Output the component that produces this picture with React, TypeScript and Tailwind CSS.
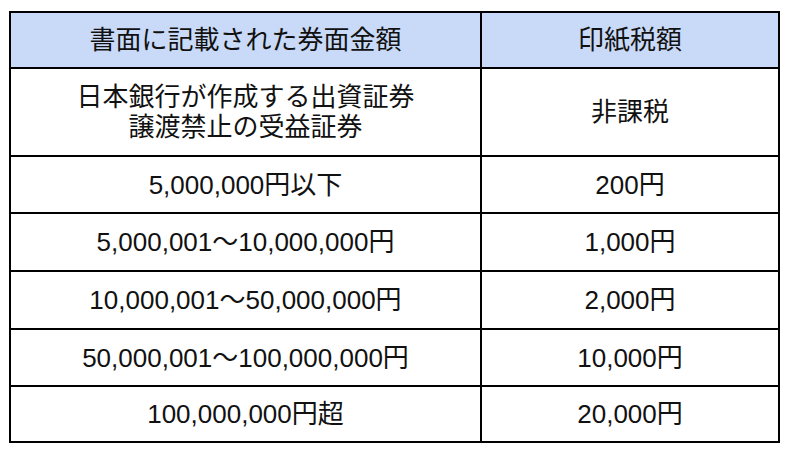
// Stamp duty table (印紙税額) for securities, by face value.

const rows: { amount: string[]; tax: string; h: string }[] = [
  { amount: ["日本銀行が作成する出資証券", "譲渡禁止の受益証券"], tax: "非課税", h: "h-[88px]" },
  { amount: ["5,000,000円以下"], tax: "200円", h: "h-[57px]" },
  { amount: ["5,000,001〜10,000,000円"], tax: "1,000円", h: "h-[58px]" },
  { amount: ["10,000,001〜50,000,000円"], tax: "2,000円", h: "h-[58px]" },
  { amount: ["50,000,001〜100,000,000円"], tax: "10,000円", h: "h-[57px]" },
  { amount: ["100,000,000円超"], tax: "20,000円", h: "h-[56px]" },
];

export default function App() {
  return (
    <div
      className="h-[452px] w-[792px] bg-white pl-[9px] pt-[11px] text-[26px] leading-[30px] text-[#111]"
      style={{ fontFamily: '"Liberation Sans", "Noto Sans CJK JP", sans-serif' }}
    >
      <div className="flex w-[771px] flex-col border-2 border-black">
        <div className="flex h-[54px] bg-[#c9daf8]">
          <div className="flex w-[471px] items-center justify-center border-r-2 border-black">
            書面に記載された券面金額
          </div>
          <div className="flex flex-1 items-center justify-center">印紙税額</div>
        </div>
        {rows.map((row) => (
          <div key={row.tax} className={`flex border-t-2 border-black ${row.h}`}>
            <div className="flex w-[471px] flex-col items-center justify-center border-r-2 border-black">
              {row.amount.map((line) => (
                <span key={line}>{line}</span>
              ))}
            </div>
            <div className="flex flex-1 items-center justify-center">{row.tax}</div>
          </div>
        ))}
      </div>
    </div>
  );
}
